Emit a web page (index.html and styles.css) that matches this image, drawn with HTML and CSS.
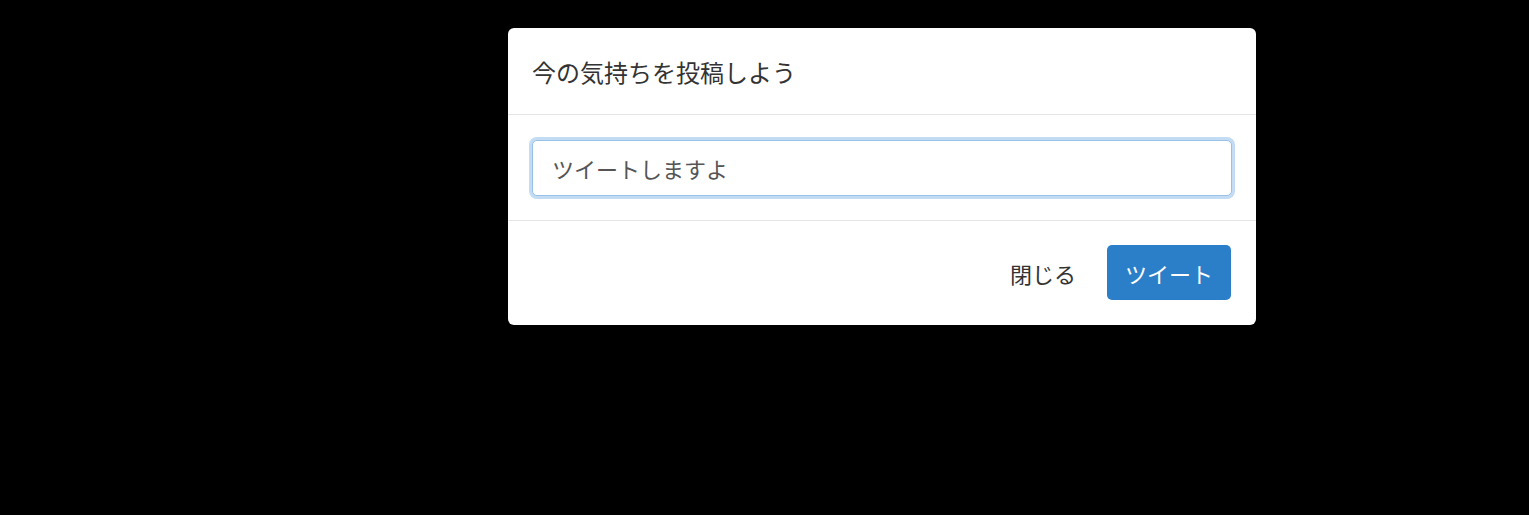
FILE: index.html
```html
<!DOCTYPE html>
<html lang="ja">
<head>
  <meta charset="UTF-8">
  <meta name="viewport" content="width=device-width, initial-scale=1.0">
  <title>ツイート</title>
  <link rel="stylesheet" href="styles.css">
</head>
<body>
  <!-- モーダル -->
  <div class="modal-dialog">
    <div class="modal-content">
      <div class="modal-header">
        <h4 class="modal-title">今の気持ちを投稿しよう</h4>
      </div>
      <div class="modal-body">
        <input type="text" class="form-control" value="ツイートしますよ">
      </div>
      <div class="modal-footer">
        <button type="button" class="btn btn-link">閉じる</button>
        <button type="button" class="btn btn-primary">ツイート</button>
      </div>
    </div>
  </div>
</body>
</html>
```

FILE: styles.css
```css
/* リセット */
* {
  margin: 0;
  padding: 0;
  box-sizing: border-box;
}

body {
  font-family: "Noto Sans CJK JP", "Noto Sans", sans-serif;
  background-color: #000;
  color: #333;
}

/* モーダル */
.modal-dialog {
  width: 748px;
  margin: 28px 0 0 508px;
}

.modal-content {
  background-color: #fff;
  border-radius: 6px;
  overflow: hidden;
}

.modal-header {
  height: 87px;
  padding: 0 24px;
  display: flex;
  align-items: center;
  border-bottom: 1px solid #e5e5e5;
}

.modal-title {
  font-size: 24px;
  font-weight: normal;
  color: #333;
}

.modal-body {
  padding: 25px 24px 24px 24px;
  border-bottom: 1px solid #e5e5e5;
}

.form-control {
  display: block;
  width: 100%;
  height: 56px;
  padding: 0 19px;
  font-family: inherit;
  font-size: 22px;
  color: #555;
  border: 1px solid #96c2ea;
  border-radius: 5px;
  box-shadow: 0 0 0 3px #c3dcf3;
  outline: none;
}

.modal-footer {
  display: flex;
  justify-content: flex-end;
  align-items: center;
  gap: 13px;
  padding: 24px 25px 25px 24px;
}

.btn {
  height: 55px;
  padding: 0 18px;
  font-family: inherit;
  font-size: 22px;
  border: none;
  border-radius: 5px;
  cursor: pointer;
}

.btn-link {
  background: transparent;
  color: #333;
}

.btn-primary {
  background-color: #2a7fc8;
  color: #fff;
}
```
